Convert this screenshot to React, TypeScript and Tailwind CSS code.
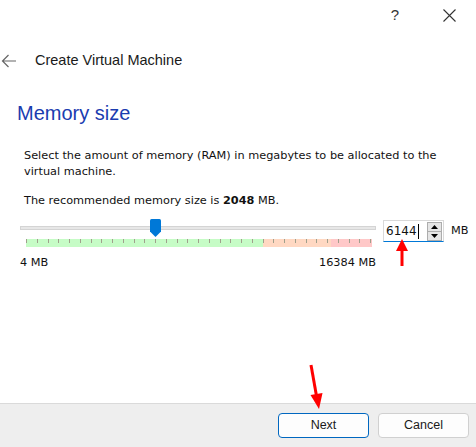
import React from 'react';

const FONT = '"Liberation Sans", Arial, sans-serif';
const BODY = '"DejaVu Sans", Verdana, sans-serif';

// tick band: 33 ticks across 344px
const TICKS = Array.from({ length: 33 }, (_, i) => Math.round(i * 10.75) + 0.5);

const TickBand = () => (
  <svg width="346" height="8" className="block">
    <rect x="0" y="0" width="237" height="8" fill="#c6fcc6" />
    <rect x="237" y="0" width="68" height="8" fill="#ffd8c2" />
    <rect x="305" y="0" width="41" height="8" fill="#ffc8c8" />
    {TICKS.map((x, i) => (
      <line key={i} x1={x} y1="0" x2={x} y2="4" stroke="#a0a08c" strokeWidth="1" />
    ))}
  </svg>
);

const Handle = () => (
  <svg width="11" height="18" className="block">
    <path d="M1.5 0 H9.5 Q11 0 11 1.5 V12.5 L5.5 18 L0 12.5 V1.5 Q0 0 1.5 0 Z" fill="#0078d7" />
  </svg>
);

const App = () => {
  return (
    <div
      className="relative w-[476px] h-[447px] bg-white flex flex-col text-[#1a1a1a] overflow-hidden"
      style={{ fontFamily: FONT }}
    >
      {/* title bar */}
      <div className="h-[30px] flex items-center justify-end pr-[20px] gap-[44px]">
        <span className="text-[15px] text-[#333]">?</span>
        <svg width="13" height="13" className="block">
          <path d="M0.5 0.5 L12.5 12.5 M12.5 0.5 L0.5 12.5" stroke="#333" strokeWidth="1.1" />
        </svg>
      </div>

      {/* header */}
      <div className="h-[32px] mt-[15px] flex items-center">
        <svg width="16" height="14" className="block ml-[1px]">
          <path d="M15 7 H1.5 M7.5 1 L1.5 7 L7.5 13" stroke="#666" strokeWidth="1.2" fill="none" />
        </svg>
        <span className="ml-[18px] text-[14.5px]">Create Virtual Machine</span>
      </div>

      {/* page */}
      <div className="flex-1 flex flex-col">
        <div className="mt-[23px] ml-[17px] text-[20px] leading-[26px] text-[#1a3cb0]">Memory size</div>

        <div style={{ fontFamily: BODY }} className="text-[11.3px] leading-[16px] text-[#111]">
          <div className="mt-[22px] ml-[24px] mr-[20px]">
            Select the amount of memory (RAM) in megabytes to be allocated to the virtual machine.
          </div>

          <div className="mt-[13px] ml-[24px]">
            The recommended memory size is <b>2048</b> MB.
          </div>

          {/* slider row */}
          <div className="mt-[10px] ml-[20px] flex items-start">
            <div className="w-[356px] flex flex-col">
              <div className="h-[18px] flex items-center relative">
                <div className="w-full h-[4px] bg-[#e7e7e7] border border-[#d4d4d4]" />
                <div className="absolute left-[130px] top-0">
                  <Handle />
                </div>
              </div>
              <div className="mt-[2px] ml-[6px]">
                <TickBand />
              </div>
              <div className="mt-[8px] flex justify-between">
                <span>4 MB</span>
                <span>16384 MB</span>
              </div>
            </div>

            <div className="ml-[7px] mt-[1px] w-[61px] h-[22px] flex items-center border border-[#d9d9d9] border-b-[#0078d7] bg-white">
              <span className="ml-[2px] text-[12px]">6144</span>
              <span className="w-px h-[15px] bg-black ml-[1px]" />
              <div className="ml-auto mr-[1px] w-[15px] h-[19px] flex flex-col border border-[#adadad] bg-[#e5e5e5]">
                <div className="flex-1 flex items-center justify-center border-b border-[#adadad]">
                  <svg width="7" height="4"><path d="M0 4 L3.5 0 L7 4 Z" fill="#000" /></svg>
                </div>
                <div className="flex-1 flex items-center justify-center">
                  <svg width="7" height="4"><path d="M0 0 L3.5 4 L7 0 Z" fill="#000" /></svg>
                </div>
              </div>
            </div>
            <span className="ml-[7px] mt-[4px]">MB</span>
          </div>
        </div>
      </div>

      {/* footer */}
      <div className="h-[44px] bg-[#eeeeee] border-t border-[#dadada] flex items-center justify-end gap-[9px] pr-[7px]">
        <button className="w-[91px] h-[25px] rounded-[4px] border border-[#0067c0] bg-[#fdfdfd] text-[12.5px] text-[#1a1a1a]">
          Next
        </button>
        <button className="w-[91px] h-[25px] rounded-[4px] border border-[#d0d0d0] bg-[#fdfdfd] text-[12.5px] text-[#1a1a1a]">
          Cancel
        </button>
      </div>

      {/* annotation arrows */}
      <svg className="absolute left-0 top-0 pointer-events-none" width="476" height="447">
        <path d="M402 250 V266" stroke="#f00" strokeWidth="3" />
        <path d="M396 251 L402 239 L408 251 Z" fill="#f00" />
        <path d="M311 365 L316.5 396" stroke="#f00" strokeWidth="3" />
        <path d="M310.5 395 L319 409 L322.5 393 Z" fill="#f00" />
      </svg>
    </div>
  );
};

export default App;
